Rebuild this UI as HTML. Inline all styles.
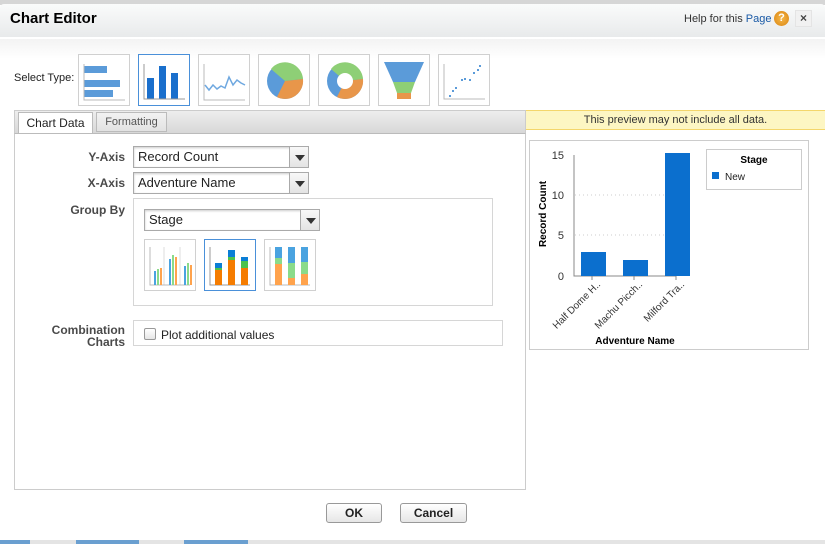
<!DOCTYPE html>
<html><head><style>
*{box-sizing:border-box;margin:0;padding:0}
body{width:825px;height:544px;background:#fff;font-family:"Liberation Sans",Arial,sans-serif;position:relative;overflow:hidden;font-size:12px;color:#222}
.a{position:absolute}
.sel{position:absolute;border:1px solid #aaa;background:#fff;height:22px;font-size:13px;padding:2px 4px;line-height:16px;box-shadow:inset 0 1px 2px #ccc}
.sel .ar{position:absolute;right:0;top:0;width:19px;height:20px;border-left:1px solid #aaa;background:linear-gradient(#f8f8f8,#e4e4e4)}
.sel .ar:after{content:"";position:absolute;left:5px;top:8px;border-left:5px solid transparent;border-right:5px solid transparent;border-top:6px solid #333}
.ic{position:absolute;width:52px;height:52px;border:1px solid #d0d0d0;background:#fff}
.lbl{position:absolute;right:700px;font-weight:bold;color:#4a4a4a;font-size:12px;text-align:right}
.btn{position:absolute;height:20px;border:1px solid #999;border-radius:3px;background:linear-gradient(#fff,#e6e6e6);font-weight:bold;font-size:12px;text-align:center;line-height:18px}
</style></head><body>
<div class="a" style="left:0;top:0;width:825px;height:5px;background:#d6d6d6"></div>
<div class="a" style="left:0;top:4px;width:825px;height:34px;background:linear-gradient(#fafbfb,#e8eaeb);border-bottom:1px solid #fff;border-radius:4px 4px 0 0"></div>
<div class="a" style="left:10px;top:10px;font-size:15px;font-weight:bold;color:#000">Chart Editor</div>
<div class="a" style="left:684px;top:13px;font-size:11px;color:#333">Help for this <span style="color:#1a5aa6">Page</span></div>
<div class="a" style="left:774px;top:11px;width:15px;height:15px;border-radius:50%;background:radial-gradient(#f6b84a,#d98410);color:#fff;font-weight:bold;font-size:11px;text-align:center;line-height:15px">?</div>
<div class="a" style="left:795px;top:10px;width:17px;height:17px;background:#f1f1f1;border:1px solid #e4e4e4;font-weight:bold;font-size:12px;text-align:center;line-height:15px;color:#444">×</div>
<div class="a" style="left:0;top:39px;width:825px;height:20px;background:linear-gradient(#f3f3f3,#fff)"></div>
<div class="a" style="left:14px;top:72px;font-size:11px">Select Type:</div>
<div class="ic" style="left:78px;top:54px"><svg width="50" height="50"><g fill="#5b9bd9"><rect x="5" y="11" width="23" height="7"/><rect x="5" y="25" width="36" height="7"/><rect x="5" y="35" width="29" height="7"/></g><path d="M5 9V45H46" stroke="#bbb" fill="none"/></svg></div>
<div class="ic" style="left:138px;top:54px;border-color:#4a90d9"><svg width="50" height="50"><g fill="#1a6fcc"><rect x="8" y="23" width="7" height="21"/><rect x="20" y="11" width="7" height="33"/><rect x="32" y="18" width="7" height="26"/></g><path d="M5 9V44H46" stroke="#999" fill="none"/></svg></div>
<div class="ic" style="left:198px;top:54px"><svg width="50" height="50"><path d="M5 9V45H46" stroke="#bbb" fill="none"/><path d="M6 30L10 35 14 30 18 34 22 31 26 33 30 22 34 30 38 25 42 28 46 30" stroke="#6fa8e0" stroke-width="1.5" fill="none"/></svg></div>
<div class="ic" style="left:258px;top:54px"><svg width="50" height="50"><circle cx="26" cy="26" r="18" fill="#5b9bd9"/><path d="M26 26L12 14A18 18 0 0 1 44 24Z" fill="#8ecf76"/><path d="M26 26L44 24A18 18 0 0 1 18 42Z" fill="#e8964a"/></svg></div>
<div class="ic" style="left:318px;top:54px"><svg width="50" height="50"><circle cx="26" cy="26" r="18" fill="#5b9bd9"/><path d="M26 26L12 14A18 18 0 0 1 44 24Z" fill="#8ecf76"/><path d="M26 26L44 24A18 18 0 0 1 18 42Z" fill="#e8964a"/><circle cx="26" cy="26" r="8" fill="#fff"/></svg></div>
<div class="ic" style="left:378px;top:54px"><svg width="50" height="50"><path d="M5 7H45L36 27H14Z" fill="#5b9bd9"/><path d="M14 27H36L32 38H18Z" fill="#8ecf76"/><rect x="18" y="38" width="14" height="6" fill="#e8964a"/></svg></div>
<div class="ic" style="left:438px;top:54px"><svg width="50" height="50"><path d="M5 9V44H46" stroke="#bbb" fill="none"/><g fill="#5b9bd9"><rect x="10" y="40" width="2" height="2"/><rect x="13" y="35" width="2" height="2"/><rect x="16" y="32" width="2" height="2"/><rect x="22" y="24" width="2" height="2"/><rect x="25" y="23" width="2" height="2"/><rect x="30" y="24" width="2" height="2"/><rect x="34" y="17" width="2" height="2"/><rect x="38" y="14" width="2" height="2"/><rect x="40" y="10" width="2" height="2"/></g></svg></div>
<div class="a" style="left:14px;top:110px;width:512px;height:23px;background:linear-gradient(#eee,#d8d8d8);border:1px solid #ccc;border-bottom:none"></div>
<div class="a" style="left:18px;top:112px;width:75px;height:22px;background:#fff;border:1px solid #bbb;border-bottom:none;font-size:12px;text-align:center;line-height:20px;color:#222">Chart Data</div>
<div class="a" style="left:96px;top:112px;width:71px;height:20px;background:linear-gradient(#f2f2f2,#e2e2e2);border:1px solid #bbb;font-size:11px;text-align:center;line-height:18px;color:#555">Formatting</div>
<div class="a" style="left:14px;top:133px;width:512px;height:357px;border:1px solid #ccc;border-top:1px solid #bbb"></div>
<div class="lbl" style="top:150px">Y-Axis</div>
<div class="sel" style="left:133px;top:146px;width:176px">Record Count<div class="ar"></div></div>
<div class="lbl" style="top:176px">X-Axis</div>
<div class="sel" style="left:133px;top:172px;width:176px">Adventure Name<div class="ar"></div></div>
<div class="lbl" style="top:203px">Group By</div>
<div class="a" style="left:133px;top:198px;width:360px;height:108px;border:1px solid #d6d6d6"></div>
<div class="sel" style="left:144px;top:209px;width:176px">Stage<div class="ar"></div></div>
<div class="ic" style="left:144px;top:239px"><svg width="50" height="50"><path d="M5 7V45H45M19 7V45M35 7V45" stroke="#ddd" fill="none"/><path d="M5 7V45H45" stroke="#bbb" fill="none"/><g><rect x="9" y="31" width="2" height="14" fill="#4aa3e0"/><rect x="12" y="29" width="2" height="16" fill="#8adb8a"/><rect x="15" y="28" width="2" height="17" fill="#ffa34d"/><rect x="24" y="19" width="2" height="26" fill="#4aa3e0"/><rect x="27" y="15" width="2" height="30" fill="#8adb8a"/><rect x="30" y="17" width="2" height="28" fill="#ffa34d"/><rect x="39" y="26" width="2" height="19" fill="#4aa3e0"/><rect x="42" y="23" width="2" height="22" fill="#8adb8a"/><rect x="45" y="25" width="2" height="20" fill="#ffa34d"/></g></svg></div>
<div class="ic" style="left:204px;top:239px;border-color:#4a90d9"><svg width="50" height="50"><path d="M5 7V45H45" stroke="#999" fill="none"/><rect x="10" y="30" width="7" height="15" fill="#f57c00"/><rect x="10" y="28" width="7" height="2" fill="#4cc24c"/><rect x="10" y="23" width="7" height="5" fill="#0a7ed6"/><rect x="23" y="20" width="7" height="25" fill="#f57c00"/><rect x="23" y="17" width="7" height="3" fill="#4cc24c"/><rect x="23" y="10" width="7" height="7" fill="#0a7ed6"/><rect x="36" y="28" width="7" height="17" fill="#f57c00"/><rect x="36" y="21" width="7" height="7" fill="#4cc24c"/><rect x="36" y="17" width="7" height="4" fill="#0a7ed6"/></svg></div>
<div class="ic" style="left:264px;top:239px"><svg width="50" height="50"><path d="M5 7V45H45" stroke="#bbb" fill="none"/><rect x="10" y="24" width="7" height="21" fill="#ffa34d"/><rect x="10" y="18" width="7" height="6" fill="#8adb8a"/><rect x="10" y="7" width="7" height="11" fill="#4aa3e0"/><rect x="23" y="38" width="7" height="7" fill="#ffa34d"/><rect x="23" y="23" width="7" height="15" fill="#8adb8a"/><rect x="23" y="7" width="7" height="16" fill="#4aa3e0"/><rect x="36" y="34" width="7" height="11" fill="#ffa34d"/><rect x="36" y="22" width="7" height="12" fill="#8adb8a"/><rect x="36" y="7" width="7" height="15" fill="#4aa3e0"/></svg></div>
<div class="lbl" style="top:324px;line-height:12px">Combination<br>Charts</div>
<div class="a" style="left:133px;top:320px;width:370px;height:26px;border:1px solid #d6d6d6"></div>
<div class="a" style="left:144px;top:328px;width:12px;height:12px;border:1px solid #999;border-radius:2px;background:linear-gradient(#fff,#e6e6e6)"></div>
<div class="a" style="left:161px;top:328px;font-size:12px">Plot additional values</div>
<div class="a" style="left:526px;top:110px;width:299px;height:20px;background:#fdf6c3;border-top:1px solid #f4d66b;border-bottom:1px solid #f4d66b;text-align:center;line-height:18px;font-size:11px;color:#333">This preview may not include all data.</div>
<div class="a" style="left:529px;top:140px;width:280px;height:210px;border:1px solid #ccc">
<svg width="278" height="208" style="font-family:'Liberation Sans',Arial,sans-serif">
<g font-size="11" fill="#333" text-anchor="end"><text x="34" y="18">15</text><text x="34" y="58">10</text><text x="34" y="98">5</text><text x="34" y="139">0</text></g>
<path d="M45 54H145M45 94H145" stroke="#ccc" stroke-dasharray="1 3"/>
<path d="M44 14V135H146" stroke="#888" fill="none"/>
<path d="M62 135V139M104 135V139M146 135V139" stroke="#888"/>
<rect x="51" y="111" width="25" height="24" fill="#0b6fce"/>
<rect x="93" y="119" width="25" height="16" fill="#0b6fce"/>
<rect x="135" y="12" width="25" height="123" fill="#0b6fce"/>
<text transform="translate(16,73) rotate(-90)" font-size="10" font-weight="bold" text-anchor="middle">Record Count</text>
<g font-size="10" fill="#333" text-anchor="end"><text transform="translate(71,144) rotate(-45)">Half Dome H..</text><text transform="translate(113,144) rotate(-45)">Machu Picch..</text><text transform="translate(155,144) rotate(-45)">Milford Tra..</text></g>
<text x="105" y="203" font-size="10" font-weight="bold" text-anchor="middle">Adventure Name</text>
<rect x="176.5" y="8.5" width="95" height="40" fill="#fff" stroke="#ccc"/>
<text x="224" y="22" font-size="10" font-weight="bold" text-anchor="middle">Stage</text>
<rect x="182" y="31" width="7" height="7" fill="#0b6fce"/><text x="195" y="39" font-size="10" fill="#222">New</text>
</svg></div>
<div class="btn" style="left:326px;top:503px;width:56px">OK</div>
<div class="btn" style="left:400px;top:503px;width:67px">Cancel</div>
<div class="a" style="left:0;top:540px;width:825px;height:4px;background:#e4e4e4"></div>
<div class="a" style="left:0;top:540px;width:30px;height:4px;background:#6a9fd0"></div>
<div class="a" style="left:76px;top:540px;width:63px;height:4px;background:#6a9fd0"></div>
<div class="a" style="left:184px;top:540px;width:64px;height:4px;background:#6a9fd0"></div>
</body></html>
